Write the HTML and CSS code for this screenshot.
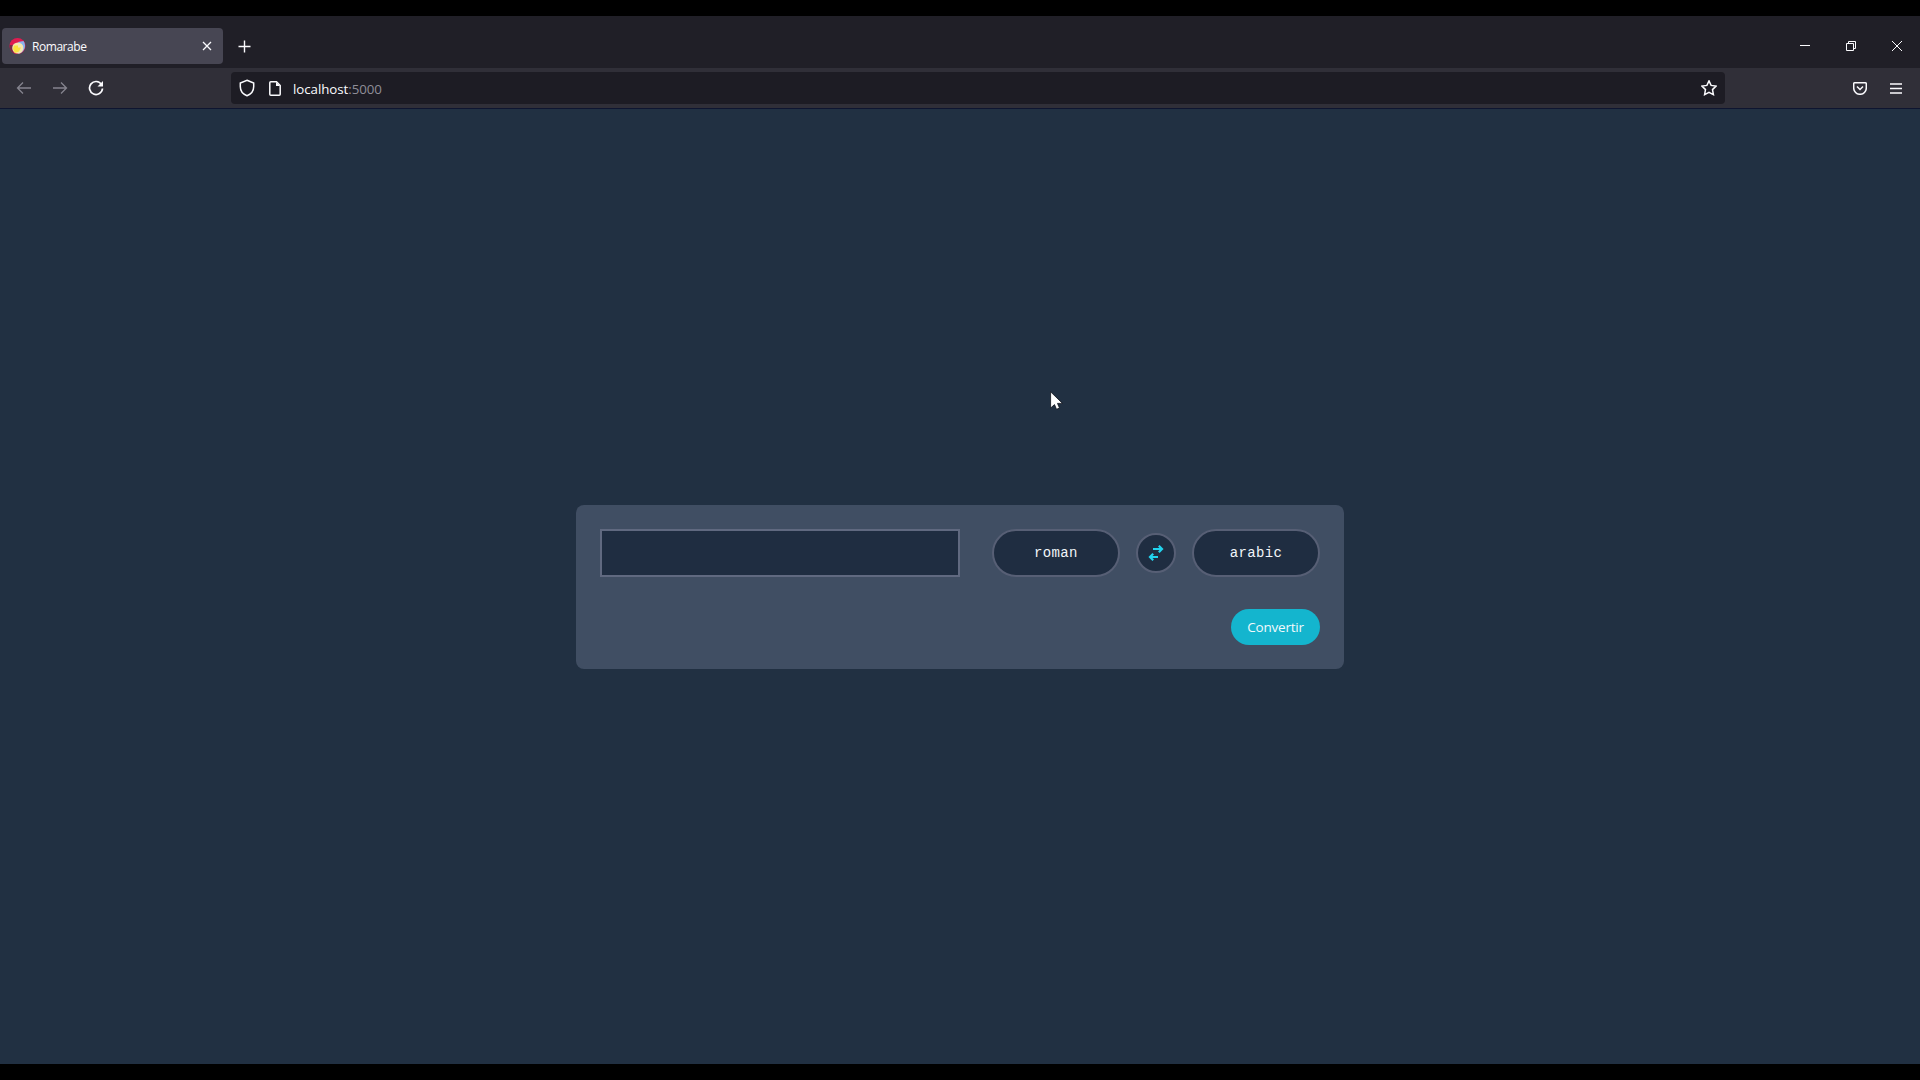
FILE: index.html
```html
<!DOCTYPE html>
<html lang="fr">
<head>
<meta charset="utf-8">
<title>Romarabe</title>
<link rel="stylesheet" href="styles.css">
</head>
<body>
<div class="browser">
  <header class="tabbar">
    <div class="tab">
      <svg class="favicon" width="18" height="18" viewBox="0 0 18 18"><circle cx="9.500" cy="9" r="8" fill="#e01b50"/><path d="M1.500 8q0 6 4 8l1-8z" fill="#7c2946"/><path d="M15.500 4A8.300 8.300 0 0 1 10 17Q14 11 10 5z" fill="#8ab4ee"/><circle cx="9.800" cy="11" r="5.600" fill="#f4e6b0"/><path d="M6 8.500h4v2h3l-2 4-4 1.500-2-4z" fill="#fbe33f"/></svg>
      <span class="tab-title">Romarabe</span>
      <svg class="tab-close" width="10" height="10" viewBox="0 0 10 10"><path d="M1 1l8 8M9 1l-8 8"/></svg>
    </div>
    <svg class="new-tab" width="13" height="13" viewBox="0 0 13 13"><path d="M6.500 .5v12M.5 6.500h12"/></svg>
    <div class="window-controls">
      <svg width="10" height="10" viewBox="0 0 10 10"><path d="M0 4.500h10"/></svg>
      <svg width="10" height="10" viewBox="0 0 10 10"><path d="M.5 2.500h7v7h-7zM2.500 2.500v-2h7v7h-2"/></svg>
      <svg width="10" height="10" viewBox="0 0 10 10"><path d="M0 0l10 10M10 0l-10 10"/></svg>
    </div>
  </header>
  <nav class="toolbar">
    <div class="nav-buttons">
      <svg class="dim" width="16" height="16" viewBox="0 0 16 16"><path d="M15 8H1.500M7 2.500L1.500 8 7 13.500"/></svg>
      <svg class="dim" width="16" height="16" viewBox="0 0 16 16"><path d="M1 8h13.500M9 2.500L14.500 8 9 13.500"/></svg>
      <svg class="reload" width="16" height="16" viewBox="0 0 16 16"><path d="M13.500 4.500A6.500 6.500 0 1 0 14.500 8.500"/><path class="solid" d="M15 1v5.500H9.500z"/></svg>
    </div>
    <div class="urlbar">
      <svg width="16" height="18" viewBox="0 0 16 18"><path d="M8 1.200l6.700 2.900v3.400c0 4.300-2.200 7.500-6.700 9.200-4.500-1.700-6.700-4.900-6.700-9.200V4.100z"/></svg>
      <svg class="page-icon" width="12" height="15" viewBox="0 0 12 15"><path d="M2 .8h5.500l3.700 3.700v8.700q0 1-1 1H1.800q-1 0-1-1V1.800q0-1 1-1z"/><path class="solid" d="M7 1v4h4z"/></svg>
      <span class="url">localhost<span class="port">:5000</span></span>
      <svg class="star" width="16" height="16" viewBox="0 0 16 16"><path d="M8 .9l2.100 4.500 5 .7-3.600 3.500.9 5L8 12.300l-4.400 2.300.9-5L.9 6.100l5-.7z"/></svg>
    </div>
    <div class="tools">
      <svg width="14" height="13" viewBox="0 0 14 13"><path d="M1.700.8h10.600q1 0 1 1V6a6.300 6.300 0 0 1-12.600 0V1.800q0-1 1-1zM4 4.500l3 3 3-3"/></svg>
      <svg width="12" height="11" viewBox="0 0 12 11"><path d="M0 1h12M0 5.500h12M0 10h12"/></svg>
    </div>
  </nav>
  <main class="page">
    <form class="card">
      <div class="fields">
        <input class="number" type="text" aria-label="Nombre">
        <div class="units">
          <span class="unit">roman</span>
          <button class="swap" type="button" aria-label="Inverser">
            <svg width="16" height="18" viewBox="0 0 16 18"><path d="M5 5h9M10.800 1.800L14 5l-3.200 3.200M10 13H2M5.200 9.800L2 13l3.200 3.200"/></svg>
          </button>
          <span class="unit">arabic</span>
        </div>
      </div>
      <button class="convert" type="button">Convertir</button>
    </form>
  </main>
</div>
<svg class="cursor" width="14" height="20" viewBox="0 0 14 20"><path d="M.6 .8v16.200l3.900-3.400 2 4.700 3-1.200-2-4.700h5z"/></svg>
</body>
</html>
```
FILE: styles.css
```css
* { box-sizing: border-box; }
body {
  margin: 0;
  height: 1080px;
  padding: 16px 0;
  overflow: hidden;
  background: #000;
  font-family: "Noto Sans", sans-serif;
}
svg { display: block; flex: none; fill: none; stroke: #fbfbfe; }
.browser { height: 1048px; display: flex; flex-direction: column; }
.tabbar {
  height: 52px;
  flex: none;
  display: flex;
  align-items: center;
  padding: 12px 12px 4px 2px;
  background: #201f27;
}
.tab {
  width: 221px;
  height: 36px;
  display: flex;
  align-items: center;
  padding: 0 11px 0 6px;
  border-radius: 4px;
  background: #474653;
}
.favicon { stroke: none; }
.tab-title {
  margin-left: 6px;
  padding-top: 2px;
  flex: 1;
  font-family: "Open Sans", sans-serif;
  font-size: 12px;
  letter-spacing: -0.45px;
  line-height: 16px;
  color: #fbfbfe;
}
.tab-close { stroke-width: 1.3; }
.new-tab { margin-left: 15px; stroke-width: 1.4; }
.window-controls { display: flex; gap: 36px; margin-left: auto; padding-right: 6px; }
.toolbar {
  height: 41px;
  flex: none;
  display: flex;
  align-items: center;
  padding: 0 18px 0 16px;
  background: #302f38;
  border-bottom: 1px solid #0e1530;
}
.nav-buttons { display: flex; gap: 20px; width: 215px; }
.dim { stroke: #85848e; stroke-width: 1.3; }
.reload { stroke-width: 1.7; }
.solid { fill: #fbfbfe; stroke: none; }
.urlbar {
  width: 1494px;
  height: 32px;
  display: flex;
  align-items: center;
  padding: 0 8px;
  border-radius: 4px;
  background: #1d1c24;
}
.urlbar svg { stroke-width: 1.5; }
.urlbar .solid { stroke: none; }
.page-icon { margin-left: 14px; }
.url { margin-left: 12px; padding-top: 1px; font-family: "Open Sans", sans-serif; font-size: 13.3px; letter-spacing: -0.05px; line-height: 18px; color: #fbfbfe; }
.port { color: #8f8e98; }
.star { margin-left: auto; }
.tools { display: flex; align-items: center; gap: 23px; margin-left: auto; stroke-width: 1.5; }
.page {
  flex: 1;
  display: flex;
  justify-content: center;
  align-items: flex-start;
  padding-top: 396px;
  background: #213042;
}
.card {
  width: 768px;
  height: 164px;
  padding: 24px;
  display: flex;
  flex-direction: column;
  justify-content: space-between;
  border-radius: 8px;
  background: #404e63;
}
.fields { display: flex; justify-content: space-between; }
.number {
  width: 360px;
  height: 48px;
  padding: 0 12px;
  border: 2px solid #606980;
  border-radius: 0;
  background: #1f2d41;
  color: #f1f5f9;
  outline: none;
}
.units { display: flex; align-items: center; gap: 16px; }
.unit {
  width: 128px;
  height: 48px;
  display: flex;
  align-items: center;
  justify-content: center;
  padding-bottom: 1px;
  border: 2px solid #575f75;
  border-radius: 24px;
  background: #1f2d41;
  color: #f1f5f9;
  font-family: "Liberation Mono", monospace;
  font-size: 14px;
  letter-spacing: 0.35px;
}
.swap {
  width: 40px;
  height: 40px;
  display: flex;
  align-items: center;
  justify-content: center;
  padding: 0;
  border: 2px solid #575f75;
  border-radius: 50%;
  background: #1f2d41;
}
.swap svg { stroke: #22d3ee; stroke-width: 2.2; }
.convert {
  width: 89px;
  height: 36px;
  align-self: flex-end;
  padding: 0;
  border: 0;
  border-radius: 18px;
  background: #14b5ce;
  color: #f1f9fc;
  font-family: "Open Sans", sans-serif;
  font-size: 13.5px;
  letter-spacing: -0.2px;
}
.cursor { position: absolute; left: 1050px; top: 391px; }
.cursor path { fill: #fff; stroke: #10131c; stroke-width: 0.8; }
```
